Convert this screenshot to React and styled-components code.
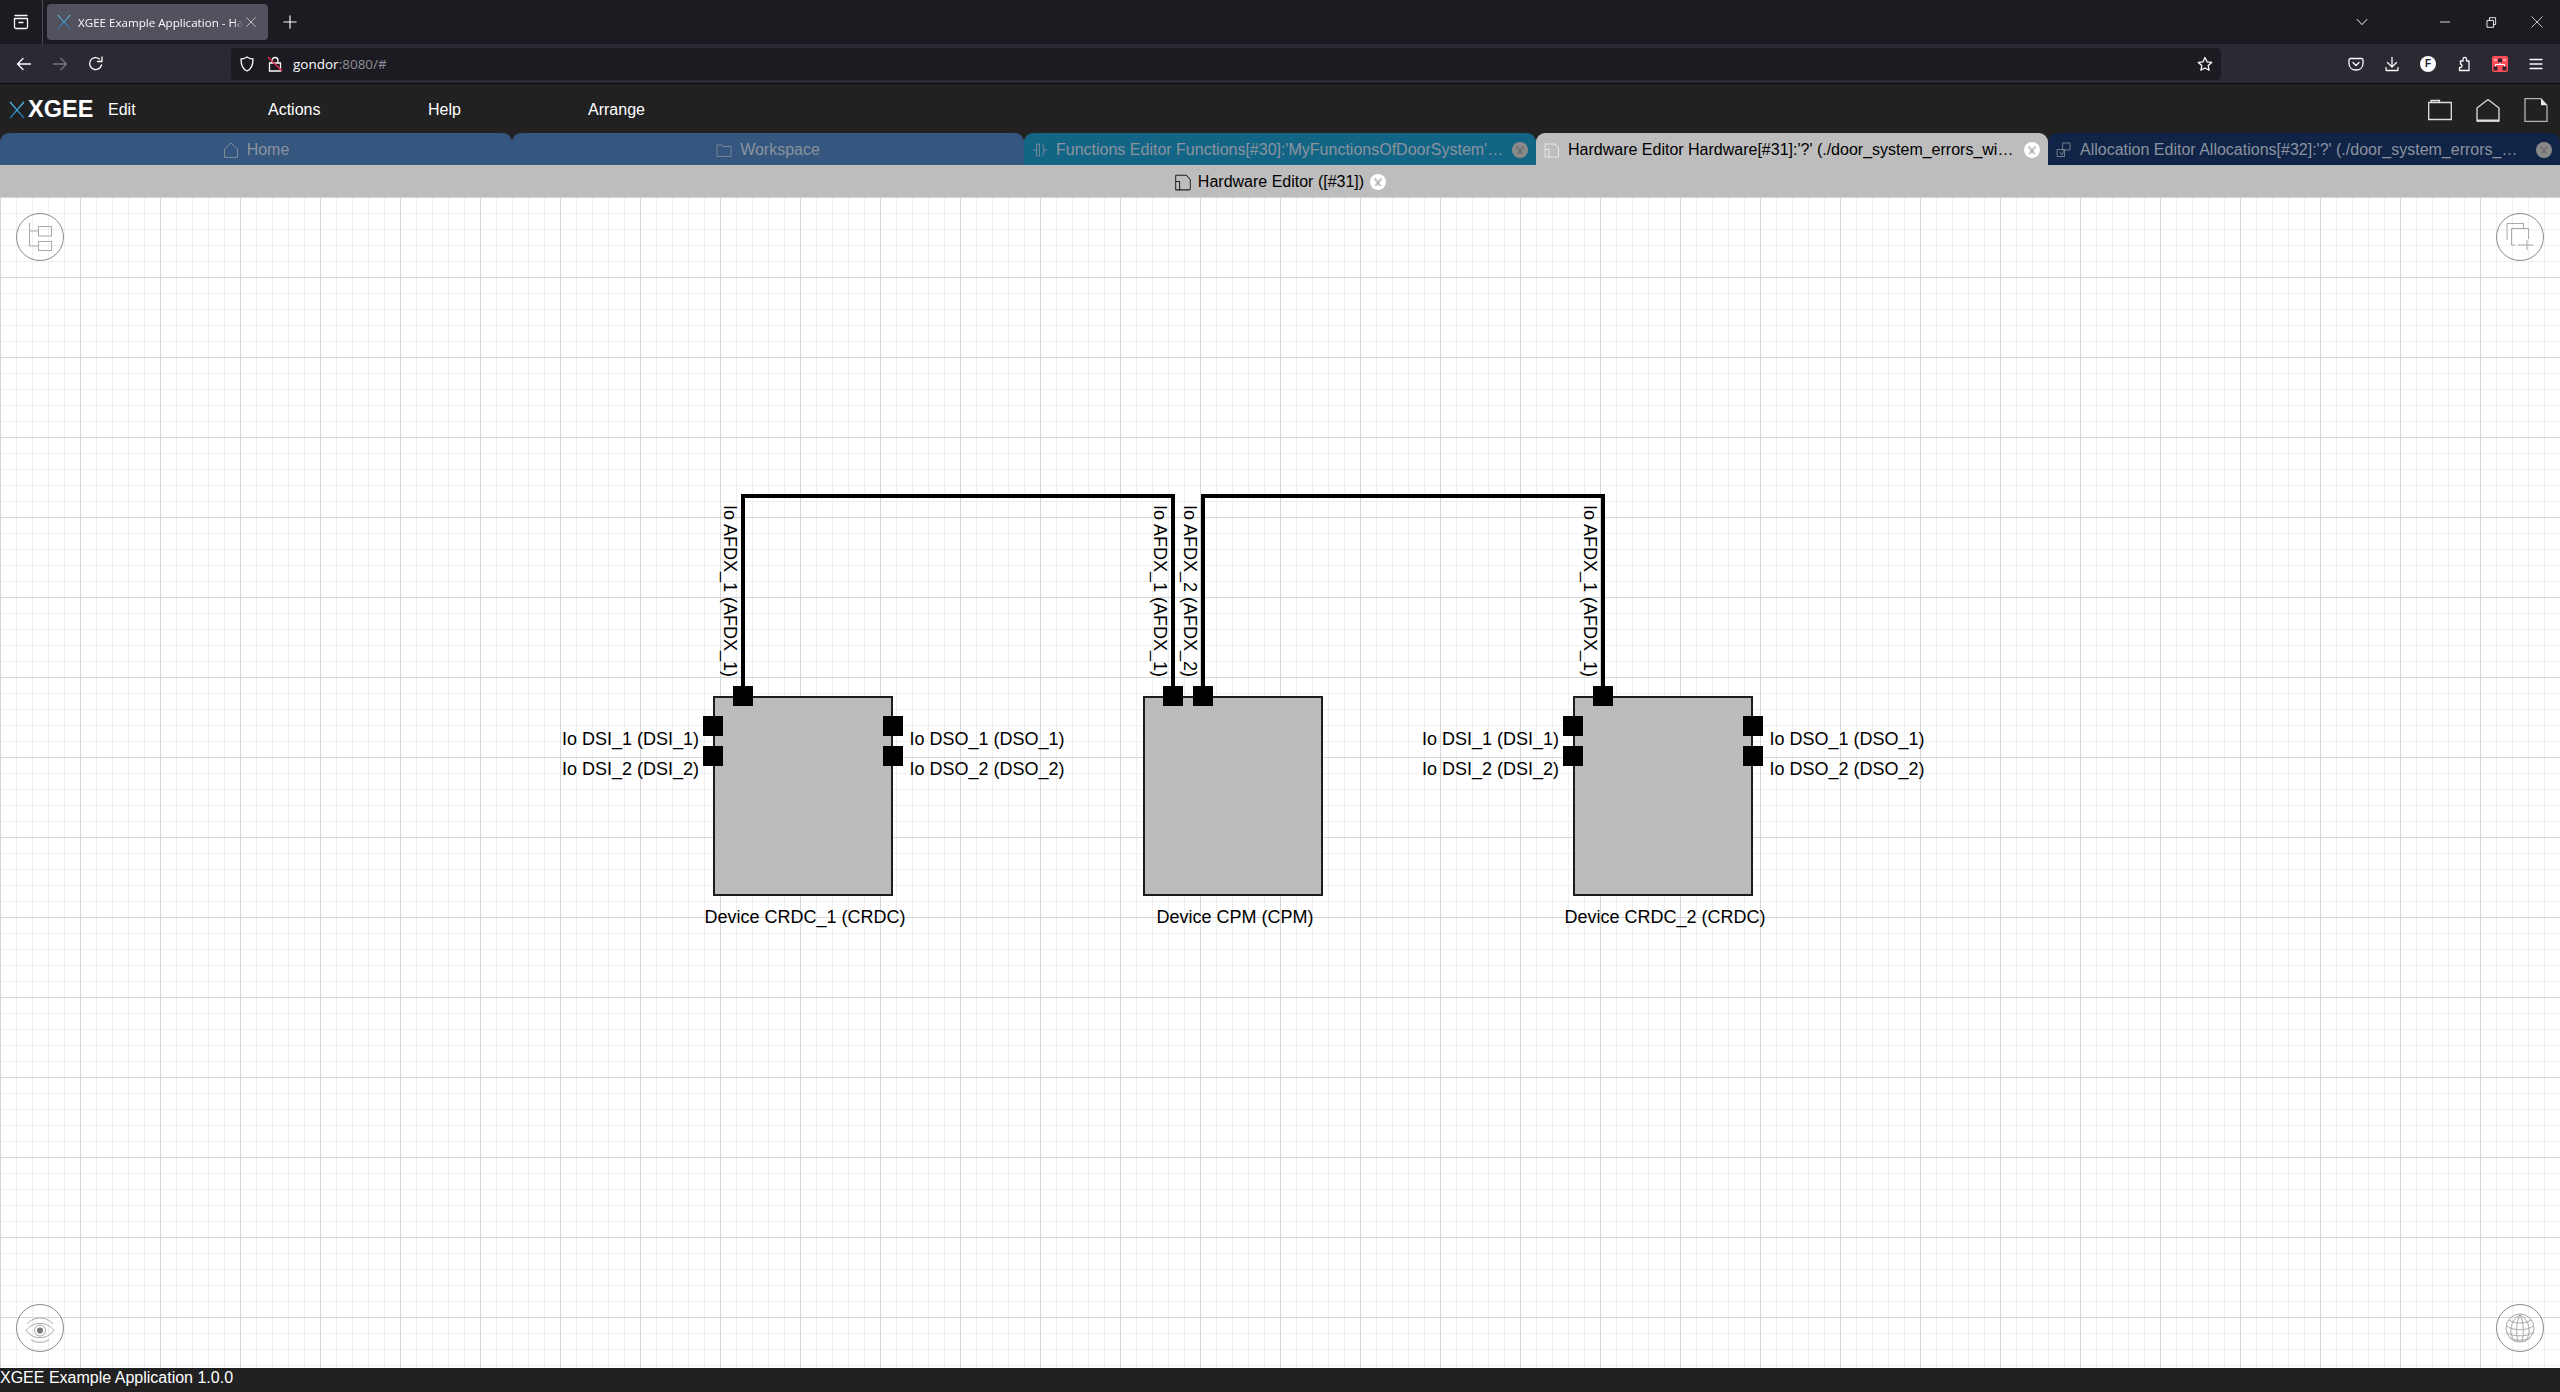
import styled, { createGlobalStyle } from 'styled-components'

const GlobalStyle = createGlobalStyle`
  html, body {
    margin: 0;
    padding: 0;
    height: 100%;
    overflow: hidden;
    font-family: 'Liberation Sans', Arial, sans-serif;
  }
`

const Page = styled.div`
  height: 100vh;
  display: flex;
  flex-direction: column;
`

/* browser chrome */
const TitleBar = styled.div`
  height: 44px;
  flex: none;
  display: flex;
  align-items: center;
  background: #1c1b22;
  color: #fbfbfe;
`

const ViewButton = styled.div`
  width: 42px;
  height: 44px;
  flex: none;
  display: flex;
  align-items: center;
  justify-content: center;
  border-right: 1px solid #4a4a52;
  box-sizing: content-box;
`

const BrowserTab = styled.div`
  width: 221px;
  height: 36px;
  margin-left: 4px;
  flex: none;
  display: flex;
  align-items: center;
  padding: 0 10px 0 10px;
  box-sizing: border-box;
  gap: 7px;
  border-radius: 4px;
  background: #52525e;
`

const BrowserTabTitle = styled.span`
  width: 165px;
  margin-right: -4px;
  flex: none;
  white-space: nowrap;
  font-family: 'Open Sans', sans-serif;
  font-size: 11.6px;
  -webkit-mask-image: linear-gradient(to right, #000 94%, transparent);
  mask-image: linear-gradient(to right, #000 94%, transparent);
`

const NewTab = styled.div`
  width: 44px;
  flex: none;
  display: flex;
  justify-content: center;
`

const Spacer = styled.div`
  flex: 1;
`

const WindowButton = styled.div`
  width: 46px;
  height: 44px;
  flex: none;
  display: flex;
  align-items: center;
  justify-content: center;
`

const TabList = styled(WindowButton)`
  margin-right: 37px;
`

const NavBar = styled.div`
  height: 40px;
  flex: none;
  display: flex;
  align-items: center;
  padding: 0 6px;
  background: #2b2a33;
  border-bottom: 1px solid #0c0c0d;
  box-sizing: border-box;
  color: #fbfbfe;
`

const NavButton = styled.div`
  width: 36px;
  height: 32px;
  flex: none;
  display: flex;
  align-items: center;
  justify-content: center;
  color: ${(p) => (p.$dim ? '#77767c' : '#fbfbfe')};
`

const UrlBar = styled.div`
  flex: 1;
  height: 32px;
  margin: 0 117px;
  padding: 0 8px 0 2px;
  display: flex;
  align-items: center;
  background: #1c1b22;
  border-radius: 4px;
`

const UrlIcon = styled.div`
  width: 28px;
  flex: none;
  display: flex;
  justify-content: center;
`

const UrlText = styled.span`
  margin-left: 4px;
  font-family: 'Open Sans', sans-serif;
  font-size: 13.5px;
  color: #fbfbfe;

  em {
    font-style: normal;
    color: #8f8f96;
  }
`

const ProfileBadge = styled.span`
  width: 16px;
  height: 16px;
  border-radius: 50%;
  background: #fbfbfe;
  color: #1c1b22;
  font-size: 10px;
  font-weight: 700;
  line-height: 16px;
  text-align: center;
`

const ExtensionBadge = styled.svg`
  display: block;
  width: 16px;
  height: 16px;
`

/* application */
const AppMenu = styled.div`
  height: 49px;
  flex: none;
  display: flex;
  align-items: center;
  padding-top: 2px;
  box-sizing: border-box;
  background: #212121;
  color: #fff;
`

const Brand = styled.div`
  width: 108px;
  flex: none;
  display: flex;
  align-items: center;
  padding-left: 9px;
  box-sizing: border-box;
  gap: 3px;
  font-size: 23.5px;
  font-weight: 700;
`

const MenuItem = styled.div`
  width: 160px;
  flex: none;
  font-size: 16px;
`

const AppActions = styled.div`
  margin-left: auto;
  padding-right: 12px;
  display: flex;
  gap: 24px;
`

const AppActionIcon = styled.svg`
  display: block;
  width: 24px;
  height: 24px;
  fill: none;
  stroke: #e0e0e0;
  stroke-width: 1.3;
`

const TabStrip = styled.div`
  height: 32px;
  flex: none;
  display: flex;
  background: #212121;
`

const tabColors = {
  home: '#34567f',
  functions: '#136586',
  active: '#bdbdbd',
  allocation: '#102448',
}

const Tab = styled.div`
  width: 512px;
  flex: none;
  display: flex;
  align-items: center;
  justify-content: ${(p) => (p.$center ? 'center' : 'flex-start')};
  gap: 8px;
  padding: 1px 8px 0;
  box-sizing: border-box;
  border-radius: 9px 9px 0 0;
  font-size: 16px;
  background: ${(p) => tabColors[p.$kind]};
  color: ${(p) => (p.$kind === 'active' ? '#000' : '#8b939d')};
`

const TabLabel = styled.span`
  flex: ${(p) => (p.$grow ? 1 : 'none')};
  min-width: 0;
  white-space: nowrap;
`

const SubTabBar = styled.div`
  height: 32px;
  flex: none;
  display: flex;
  align-items: center;
  justify-content: center;
  gap: 6px;
  padding-top: 1px;
  box-sizing: border-box;
  background: #bdbdbd;
  font-size: 16px;
  color: #000;
`

const CloseDisc = styled.svg`
  display: block;
  width: 16px;
  height: 16px;
  flex: none;
`

/* diagram canvas */
const Canvas = styled.div`
  flex: 1;
  position: relative;
  overflow: hidden;
  background-color: #fff;
  background-image:
    linear-gradient(to right, #d6d6d6 1px, transparent 1px),
    linear-gradient(to bottom, #d6d6d6 1px, transparent 1px),
    linear-gradient(to right, #efefef 1px, transparent 1px),
    linear-gradient(to bottom, #efefef 1px, transparent 1px);
  background-size: 80px 80px, 80px 80px, 16px 16px, 16px 16px;
`

const WireLayer = styled.svg`
  position: absolute;
  left: 0;
  top: 0;
  width: 100%;
  height: 100%;
`

const Device = styled.div`
  position: absolute;
  left: ${(p) => p.$x}px;
  top: 499px;
  width: 180px;
  height: 200px;
`

const DeviceBody = styled.div`
  height: 100%;
  box-sizing: border-box;
  border: 2px solid #1c1c1c;
  background: #bcbcbc;
`

const DeviceName = styled.div`
  position: absolute;
  left: 50%;
  top: 211px;
  transform: translateX(-50%);
  margin-left: 2px;
  line-height: 20px;
  font-size: 18px;
  white-space: nowrap;
  color: #000;
`

const Port = styled.div`
  position: absolute;
  left: ${(p) => p.$x}px;
  top: ${(p) => p.$y}px;
  width: 20px;
  height: 20px;
  background: #000;
`

const PortLabel = styled.div`
  position: absolute;
  line-height: 20px;
  font-size: 18px;
  white-space: nowrap;
  color: #000;
  ${(p) => p.$side === 'left' && 'right: calc(100% + 4px); top: 13px;'}
  ${(p) => p.$side === 'right' && 'left: 26.5px; top: 13px;'}
  ${(p) => p.$side === 'top' && 'left: -12px; top: -181px; writing-mode: vertical-rl; line-height: 18px;'}
`

const RoundButton = styled.div`
  position: absolute;
  ${(p) => (p.$right ? 'right: 16px;' : 'left: 16px;')}
  ${(p) => (p.$bottom ? 'bottom: 16px;' : 'top: 16px;')}
  width: 48px;
  height: 48px;
  box-sizing: border-box;
  border: 1px solid #8c8c8c;
  border-radius: 50%;
`

const RoundIcon = styled.svg`
  display: block;
  width: 46px;
  height: 46px;
  fill: none;
  stroke: #a8a8a8;
  stroke-width: 1;
`

const StatusBar = styled.div`
  height: 24px;
  flex: none;
  background: #212121;
  color: #fff;
  font-size: 16px;
  line-height: 20px;
  white-space: nowrap;
`

/* drawings */
const Line = ({ size = 16, children, ...rest }) => (
  <svg width={size} height={size} viewBox="0 0 16 16" fill="none" stroke="currentColor" strokeWidth="1.3" strokeLinecap="round" strokeLinejoin="round" style={{ display: 'block' }} {...rest}>
    {children}
  </svg>
)

const XMark = ({ width, height, id }) => (
  <svg width={width} height={height} viewBox="0 0 16 18" fill="none" style={{ display: 'block', flex: 'none' }}>
    <defs>
      <linearGradient id={id} x1="0" y1="1" x2="0" y2="0">
        <stop offset="0" stopColor="#1f6fb5" />
        <stop offset="1" stopColor="#5cc8f0" />
      </linearGradient>
    </defs>
    <path d="M1 1 15 17" stroke={`url(#${id})`} strokeWidth="1.2" />
    <path d="M15 1 1 17" stroke={`url(#${id})`} strokeWidth="1.2" />
  </svg>
)

const Close = ({ light }) => (
  <CloseDisc viewBox="0 0 16 16">
    <circle cx="8" cy="8" r="8" fill={light ? '#fff' : '#8a8a8a'} />
    <path d="M5 4 11 12M11 4 5 12M4 5 10 12M12 5 6 12" stroke={light ? '#9a9a9a' : '#666'} strokeWidth="0.8" fill="none" />
  </CloseDisc>
)

const HomeIcon = () => (
  <Line size={16} strokeWidth="0.9">
    <path d="M1.5 15V7L8 1l6.500 6v8z" />
  </Line>
)

const FolderIcon = () => (
  <Line size={16} strokeWidth="0.8">
    <path d="M1 14V3h5l1 1.500h8V14z" />
  </Line>
)

const SheetIcon = ({ color }) => (
  <Line size={18} strokeWidth="0.9" style={{ display: 'block', color }}>
    <path d="M1.500 2H11l3.500 4v8c0 .8-.5 1-1 1H1.500z" />
    <path d="M1.500 7.500H5V15" />
  </Line>
)

const FunctionsIcon = () => (
  <Line size={16} strokeWidth="0.8">
    <path d="M5 2h2.500v12H5zM10 2c2 1 1 3 2 6-1 3 0 5-2 6M5 8H1.500M12 8h2.500" />
  </Line>
)

const AllocationIcon = () => (
  <Line size={16} strokeWidth="0.8">
    <path d="M7 1h7v7H7zM1.500 7.500H8.500v7H1.500zM4 10l2 3 2-4" />
  </Line>
)

const wires = ['M743 489V299H1173V489', 'M1203 489V299H1603V489']

const sensorPorts = [
  { side: 'left', x: -10, y: 20, label: 'Io DSI_1 (DSI_1)' },
  { side: 'left', x: -10, y: 50, label: 'Io DSI_2 (DSI_2)' },
  { side: 'right', x: 170, y: 20, label: 'Io DSO_1 (DSO_1)' },
  { side: 'right', x: 170, y: 50, label: 'Io DSO_2 (DSO_2)' },
]

const devices = [
  {
    x: 713,
    name: 'Device CRDC_1 (CRDC)',
    ports: [{ side: 'top', x: 20, y: -10, label: 'Io AFDX_1 (AFDX_1)' }, ...sensorPorts],
  },
  {
    x: 1143,
    name: 'Device CPM (CPM)',
    ports: [
      { side: 'top', x: 20, y: -10, label: 'Io AFDX_1 (AFDX_1)' },
      { side: 'top', x: 50, y: -10, label: 'Io AFDX_2 (AFDX_2)' },
    ],
  },
  {
    x: 1573,
    name: 'Device CRDC_2 (CRDC)',
    ports: [{ side: 'top', x: 20, y: -10, label: 'Io AFDX_1 (AFDX_1)' }, ...sensorPorts],
  },
]

const App = () => (
  <Page>
    <GlobalStyle />

    <TitleBar>
      <ViewButton>
        <Line>
          <path d="M2 1.500h12M1.500 4.500h13V13c0 1-.8 1.500-1.500 1.500H3c-.7 0-1.500-.5-1.500-1.500zM6 8.500h4" />
        </Line>
      </ViewButton>
      <BrowserTab>
        <XMark width={14} height={16} id="favicon-x" />
        <BrowserTabTitle>XGEE Example Application - Ha</BrowserTabTitle>
        <Line size={10} strokeWidth="1">
          <path d="M1 1 15 15M15 1 1 15" />
        </Line>
      </BrowserTab>
      <NewTab>
        <Line size={14}>
          <path d="M8 1v14M1 8h14" />
        </Line>
      </NewTab>
      <Spacer />
      <TabList>
        <Line size={12}>
          <path d="M1.500 4.500 8 11.500l6.500-7" />
        </Line>
      </TabList>
      <WindowButton>
        <Line size={10}>
          <path d="M0 8h16" />
        </Line>
      </WindowButton>
      <WindowButton>
        <Line size={11}>
          <path d="M2 5h9v10H2zM5 5V1h9v10h-3" />
        </Line>
      </WindowButton>
      <WindowButton>
        <Line size={12} strokeWidth="1">
          <path d="M1 1 15 15M15 1 1 15" />
        </Line>
      </WindowButton>
    </TitleBar>

    <NavBar>
      <NavButton>
        <Line>
          <path d="M14.500 8H2M7 2.500 1.500 8 7 13.500" />
        </Line>
      </NavButton>
      <NavButton $dim>
        <Line>
          <path d="M1.500 8H14M9 2.500 14.500 8 9 13.500" />
        </Line>
      </NavButton>
      <NavButton>
        <Line>
          <path d="M13.500 9A6 6 0 1 1 11.500 3M14 1v4.500H9.500" />
        </Line>
      </NavButton>
      <UrlBar>
        <UrlIcon>
          <Line>
            <path d="M8 1c2 1.500 4 2 6 2 0 6-1 10-6 12C3 13 2 9 2 3c2 0 4-.5 6-2z" />
          </Line>
        </UrlIcon>
        <UrlIcon>
          <svg width="16" height="16" viewBox="0 0 16 16" fill="none" style={{ display: 'block' }}>
            <path d="M5 7V4.500c0-4 6-4 6 0V7M2.500 7h11v8h-11z" stroke="#fbfbfe" strokeWidth="1.300" />
            <path d="M1 1 15 15" stroke="#e22850" strokeWidth="1.500" />
          </svg>
        </UrlIcon>
        <UrlText>
          gondor<em>:8080/#</em>
        </UrlText>
        <Spacer />
        <Line>
          <path d="M8 1.500l2 4.300 4.700.6-3.500 3.200.9 4.700L8 12l-4.100 2.300.9-4.700L1.300 6.400 6 5.800z" />
        </Line>
      </UrlBar>
      <NavButton>
        <Line>
          <path d="M2.500 2.500h11c.8 0 1.500.6 1.500 1.500V7.500C15 11.500 12 14 8 14S1 11.500 1 7.500V4c0-.9.7-1.500 1.500-1.500zM5 6.500 8 9.500l3-3" />
        </Line>
      </NavButton>
      <NavButton>
        <Line>
          <path d="M8 1.500V10.500M3.500 6.500 8 11l4.500-4.500M2 11.500V14c0 .3.200.5.500.5h11c.3 0 .5-.2.5-.5v-2.500" />
        </Line>
      </NavButton>
      <NavButton>
        <ProfileBadge>F</ProfileBadge>
      </NavButton>
      <NavButton>
        <Line>
          <path d="M4.500 5H7V3.200C7 .8 10.500 .8 10.500 3.200V5H13V14.500H3.500V11.500H4.500C6.500 11.500 6.500 8 4.500 8z" />
        </Line>
      </NavButton>
      <NavButton>
        <ExtensionBadge viewBox="0 0 16 16">
          <rect width="16" height="16" rx="2" fill="#ff4f5e" />
          <path d="M2 4h3M11 4h3M8 6v2.500M3.500 8.500h9M3.500 8.500V11M12.500 8.500V11" stroke="#fff" strokeWidth="1" fill="none" />
          <path d="M6 2.500h4v4H6zM1.500 10.500h4v4h-4zM10.500 10.500h4v4h-4z" fill="#35202a" />
        </ExtensionBadge>
      </NavButton>
      <NavButton>
        <Line>
          <path d="M2 3.500h12M2 8h12M2 12.500h12" />
        </Line>
      </NavButton>
    </NavBar>

    <AppMenu>
      <Brand>
        <XMark width={16} height={18} id="logo-x" />
        XGEE
      </Brand>
      <MenuItem>Edit</MenuItem>
      <MenuItem>Actions</MenuItem>
      <MenuItem>Help</MenuItem>
      <MenuItem>Arrange</MenuItem>
      <AppActions>
        <AppActionIcon viewBox="0 0 24 24">
          <path d="M.7 21.500V4.500H23.300V21.500zM3 4.500V2.500H11.500V4.500" />
        </AppActionIcon>
        <AppActionIcon viewBox="0 0 24 24">
          <path d="M1 23V10L12 1.500 23 10V23z" />
          <path d="M1 22.500H23" strokeWidth="2" />
        </AppActionIcon>
        <AppActionIcon viewBox="0 0 24 24">
          <path d="M1 23.500V.7h16l6 6.500v16.300z" stroke="#b4b4b4" />
          <path d="M17 .7 23 7.200H17z" fill="#e8e8e8" stroke="none" />
        </AppActionIcon>
      </AppActions>
    </AppMenu>

    <TabStrip>
      <Tab $kind="home" $center>
        <HomeIcon />
        <TabLabel>Home</TabLabel>
      </Tab>
      <Tab $kind="home" $center>
        <FolderIcon />
        <TabLabel>Workspace</TabLabel>
      </Tab>
      <Tab $kind="functions">
        <FunctionsIcon />
        <TabLabel $grow>Functions Editor Functions[#30]:'MyFunctionsOfDoorSystem'…</TabLabel>
        <Close />
      </Tab>
      <Tab $kind="active">
        <Line size={16} strokeWidth="0.8" style={{ display: 'block', color: '#f4f4f4' }}>
          <path d="M1.500 2H11l3.500 4v8c0 .8-.5 1-1 1H1.500z" />
          <path d="M1.500 7.500H5V15" />
        </Line>
        <TabLabel $grow>Hardware Editor Hardware[#31]:'?' (./door_system_errors_wi…</TabLabel>
        <Close light />
      </Tab>
      <Tab $kind="allocation">
        <AllocationIcon />
        <TabLabel $grow>Allocation Editor Allocations[#32]:'?' (./door_system_errors_…</TabLabel>
        <Close />
      </Tab>
    </TabStrip>

    <SubTabBar>
      <SheetIcon color="#222" />
      <span>Hardware Editor ([#31])</span>
      <Close light />
    </SubTabBar>

    <Canvas>
      <WireLayer>
        {wires.map((d) => (
          <path key={d} d={d} fill="none" stroke="#000" strokeWidth="4" />
        ))}
      </WireLayer>

      {devices.map((device) => (
        <Device key={device.name} $x={device.x}>
          <DeviceBody />
          {device.ports.map((port) => (
            <Port key={`${port.side}${port.y}${port.x}`} $x={port.x} $y={port.y}>
              <PortLabel $side={port.side}>{port.label}</PortLabel>
            </Port>
          ))}
          <DeviceName>{device.name}</DeviceName>
        </Device>
      ))}

      <RoundButton>
        <RoundIcon viewBox="1 1 46 46">
          <path d="M13.500 10V33H22M13.500 18H22" />
          <rect x="22.500" y="13.500" width="13" height="9.500" />
          <rect x="22.500" y="28.500" width="13" height="9" />
        </RoundIcon>
      </RoundButton>
      <RoundButton $right>
        <RoundIcon viewBox="1 1 46 46">
          <path d="M11 27V10.500H27.500V15" />
          <path d="M15.500 32V15.500H32.500V26M15.500 32H19M22 32H26" />
          <path d="M31 27V37M26 32H37" />
        </RoundIcon>
      </RoundButton>
      <RoundButton $bottom>
        <RoundIcon viewBox="1 1 46 46">
          <path d="M10 26.500C17 17 31 17 38 26.500 31 36 17 36 10 26.500z" />
          <path d="M11 20C18 12 30 12 37 20M15 36c6 3 12 3 18 0" />
          <circle cx="24" cy="26.500" r="5.500" />
          <circle cx="24" cy="26.500" r="3" fill="#777" stroke="none" />
        </RoundIcon>
      </RoundButton>
      <RoundButton $right $bottom>
        <RoundIcon viewBox="1 1 46 46">
          <circle cx="24" cy="24" r="14" />
          <path d="M24 11C14 16 12 30 19 37.500M24 11C20 18 20 30 22 38M24 11C28 18 28 30 26 38M24 11C34 16 36 30 29 37.500" />
          <path d="M13 16C18 20 30 20 35 16M10.500 22C18 27 30 27 37.500 22M10.500 28.500C18 33 30 33 37.500 28.500M14 34C18 37 30 37 34 34" />
        </RoundIcon>
      </RoundButton>
    </Canvas>

    <StatusBar>XGEE Example Application 1.0.0</StatusBar>
  </Page>
)

export default App
